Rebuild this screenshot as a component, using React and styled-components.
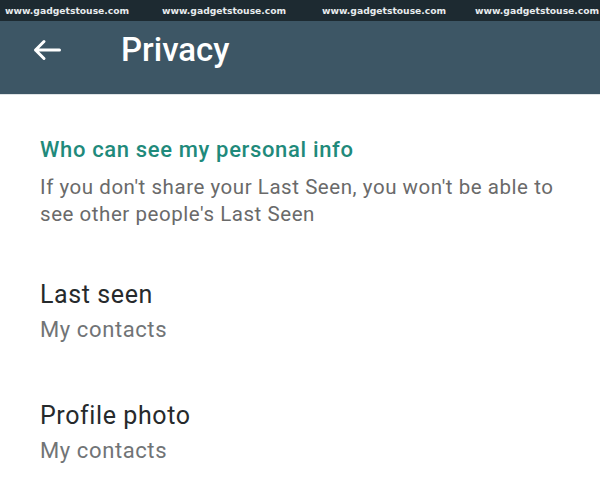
import styled, { createGlobalStyle } from "styled-components";

const GlobalStyle = createGlobalStyle`
  html, body {
    margin: 0;
    padding: 0;
    background: #ffffff;
    font-family: Roboto, "Liberation Sans", Arial, sans-serif;
  }
`;

const Page = styled.div`
  width: 600px;
  height: 480px;
  overflow: hidden;
  background: #ffffff;
`;

const WatermarkBar = styled.div`
  height: 21px;
  background: #1d2a31;
  display: flex;
  align-items: center;
  padding-left: 5px;
  white-space: nowrap;
  overflow: hidden;
`;

const Watermark = styled.span`
  flex: 0 0 ${(p) => p.$width}px;
  font-family: "DejaVu Sans", Verdana, sans-serif;
  font-weight: bold;
  font-size: 9.2px;
  color: #e8ecee;
`;

const Toolbar = styled.div`
  box-sizing: border-box;
  height: 74px;
  background: #3d5665;
  display: flex;
  align-items: center;
  padding: 0 0 16px 33px;
  border-bottom: 1px solid #dfe3e5;
`;

const BackButton = styled.div`
  width: 28px;
  height: 40px;
  display: flex;
  align-items: center;
`;

const Title = styled.h1`
  margin: 0 0 0 60px;
  font-size: 33px;
  line-height: 40px;
  font-weight: 500;
  color: #ffffff;
`;

const Content = styled.div`
  padding: 42px 40px 0 40px;
  display: flex;
  flex-direction: column;
`;

const SectionHeading = styled.div`
  font-size: 22px;
  font-weight: 500;
  letter-spacing: 0.65px;
  color: #1f8a7b;
  line-height: 26px;
`;

const Description = styled.p`
  margin: 11px 0 0 0;
  font-size: 20.5px;
  letter-spacing: 0.55px;
  line-height: 27px;
  color: #6a6a6a;
`;

const Item = styled.div`
  display: flex;
  flex-direction: column;
  margin-top: ${(p) => p.$gap}px;
`;

const ItemTitle = styled.div`
  font-size: 25px;
  letter-spacing: 0.6px;
  line-height: 30px;
  color: #262a2c;
`;

const ItemValue = styled.div`
  font-size: 22px;
  letter-spacing: 0.6px;
  line-height: 30px;
  color: #717476;
  margin-top: 5px;
`;

const BackArrow = () => (
  <svg width="28" height="22" viewBox="0 0 28 22" fill="none">
    <path
      d="M26.5 11H2.5M11 2.5L2.5 11l8.5 8.5"
      stroke="#ffffff"
      strokeWidth="3"
      strokeLinecap="round"
      strokeLinejoin="round"
    />
  </svg>
);

const marks = [157, 160, 153, 125];

const items = [
  { title: "Last seen", value: "My contacts", gap: 52 },
  { title: "Profile photo", value: "My contacts", gap: 56 },
];

const App = () => {
  return (
    <Page>
      <GlobalStyle />
      <WatermarkBar>
        {marks.map((w, i) => (
          <Watermark key={i} $width={w}>
            www.gadgetstouse.com
          </Watermark>
        ))}
      </WatermarkBar>
      <Toolbar>
        <BackButton>
          <BackArrow />
        </BackButton>
        <Title>Privacy</Title>
      </Toolbar>
      <Content>
        <SectionHeading>Who can see my personal info</SectionHeading>
        <Description>
          If you don't share your Last Seen, you won't be able to
          <br />
          see other people's Last Seen
        </Description>
        {items.map((it) => (
          <Item key={it.title} $gap={it.gap}>
            <ItemTitle>{it.title}</ItemTitle>
            <ItemValue>{it.value}</ItemValue>
          </Item>
        ))}
      </Content>
    </Page>
  );
};

export default App;
